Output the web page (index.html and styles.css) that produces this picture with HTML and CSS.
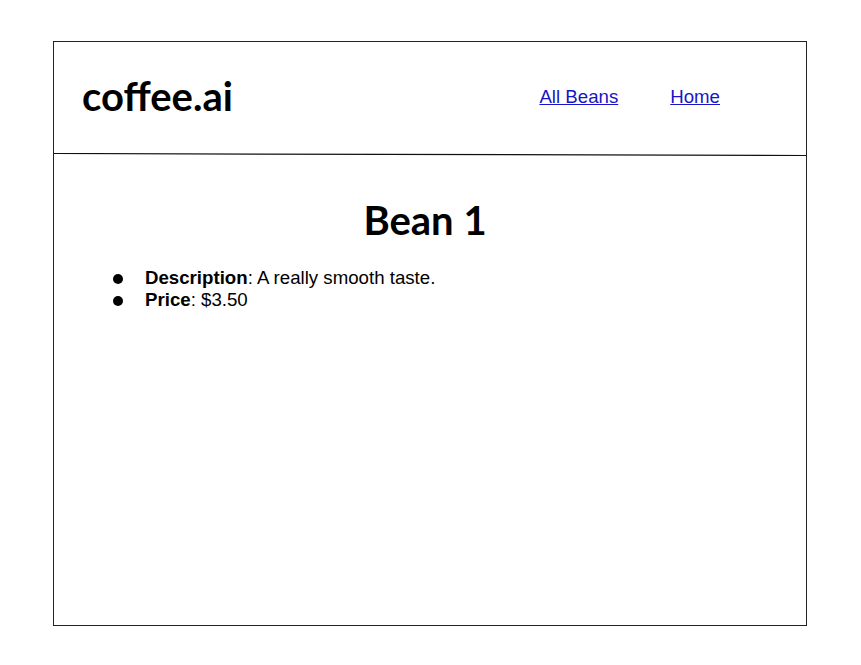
FILE: index.html
```html
<!DOCTYPE html>
<html>
<head>
<meta charset="utf-8">
<link rel="stylesheet" href="styles.css">
</head>
<body>
<div class="frame">
  <header class="header">
    <div class="brand">coffee.ai</div>
    <nav class="nav">
      <a href="#">All Beans</a>
      <a href="#">Home</a>
    </nav>
  </header>
  <svg class="divider" viewBox="0 0 751 3" preserveAspectRatio="none" aria-hidden="true">
    <line x1="0" y1="0.5" x2="751" y2="2.5" stroke="#111" stroke-width="1.2"/>
  </svg>
  <main class="content">
    <h1 class="title">Bean 1</h1>
    <ul class="details">
      <li><span><b>Description</b>: A really smooth taste.</span></li>
      <li><span><b>Price</b>: $3.50</span></li>
    </ul>
  </main>
</div>
</body>
</html>
```

FILE: styles.css
```css
html, body {
  margin: 0;
  padding: 0;
  background: #fff;
}
.frame {
  box-sizing: border-box;
  margin: 41px 0 0 53px;
  width: 754px;
  height: 585px;
  border: 1px solid #222;
  display: flex;
  flex-direction: column;
}
.header {
  box-sizing: border-box;
  height: 111px;
  display: flex;
  align-items: flex-start;
  padding: 0 86px 0 28px;
}
.divider {
  display: block;
  width: 100%;
  height: 3px;
}
.brand {
  font-family: Lato, sans-serif;
  font-weight: 700;
  font-size: 40px;
  line-height: 48px;
  margin-top: 30px;
  color: #000;
}
.nav {
  display: flex;
  gap: 52px;
  margin-left: auto;
  margin-top: 44px;
}
.nav a {
  font-family: "Liberation Sans", Arial, sans-serif;
  font-size: 18.67px;
  line-height: 22px;
  color: #1a14c8;
  text-decoration: underline;
}
.content {
  display: flex;
  flex-direction: column;
}
.title {
  font-family: Lato, sans-serif;
  font-weight: 700;
  font-size: 40px;
  line-height: 48px;
  margin: 40px 0 0 0;
  padding-right: 10px;
  text-align: center;
  color: #000;
}
.details {
  list-style: none;
  margin: 23px 0 0 0;
  padding: 0 0 0 59px;
  font-family: "Liberation Sans", Arial, sans-serif;
  font-size: 18.67px;
  line-height: 22px;
  color: #000;
}
.details li {
  display: flex;
  align-items: flex-start;
}
.details li::before {
  content: "";
  flex: none;
  width: 10px;
  height: 10px;
  border-radius: 50%;
  background: #000;
  margin: 6.5px 22px 0 0;
}
```
